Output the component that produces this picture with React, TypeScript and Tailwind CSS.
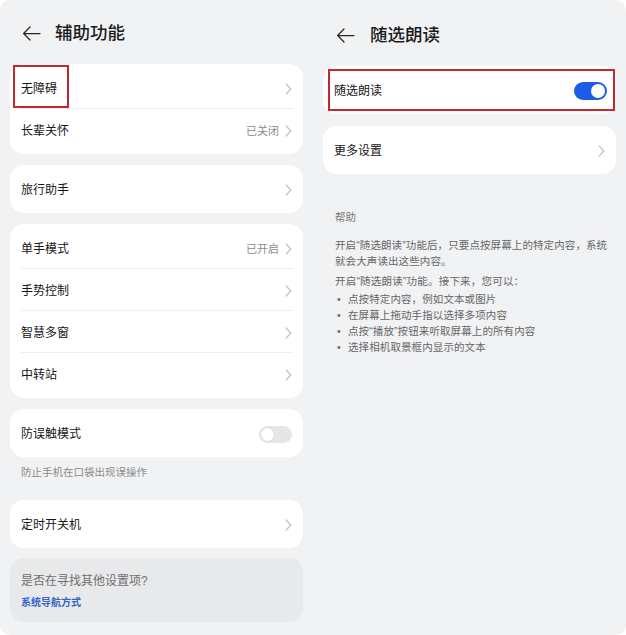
import React from "react";

const Chevron = () => (
  <svg width="7" height="12" viewBox="0 0 7 12" fill="none">
    <path d="M1.2 1l4.6 5-4.6 5" stroke="#c4c4c4" strokeWidth="1.3" strokeLinecap="round" strokeLinejoin="round" />
  </svg>
);

const Back = () => (
  <svg width="19" height="15" viewBox="0 0 19 15" fill="none">
    <path d="M18 7.5H1.6M8 1L1.6 7.5 8 14" stroke="#262626" strokeWidth="1.25" strokeLinecap="round" strokeLinejoin="round" />
  </svg>
);

const ToggleOff = () => (
  <div className="w-[33px] h-[17px] rounded-full bg-[#e6e6e8] p-[2px] flex items-center">
    <div className="w-[13px] h-[13px] rounded-full bg-white shadow-[0_0_2px_rgba(0,0,0,0.12)]" />
  </div>
);

const ToggleOn = () => (
  <div className="w-[33px] h-[18px] rounded-full bg-[#1b5ce9] p-[2px] flex items-center justify-end">
    <div className="w-[14px] h-[14px] rounded-full bg-white" />
  </div>
);

type RowProps = {
  label: string;
  value?: string;
  divider?: boolean;
  right?: React.ReactNode;
  children?: React.ReactNode;
};

const Row = ({ label, value, divider, right, children }: RowProps) => (
  <div className="relative h-[42px] flex items-center px-[11px] pt-[2px]">
    {children}
    <span className="flex-1 text-[12px] text-[#161616]">{label}</span>
    {value && <span className="text-[11px] text-[#8c8c8c] mr-[6px]">{value}</span>}
    {right ?? <Chevron />}
    {divider && <div className="absolute bottom-0 left-[10px] right-[10px] h-px bg-[#efefef]" />}
  </div>
);

const Card = ({ children }: { children: React.ReactNode }) => (
  <div className="bg-white rounded-[14px] py-[3px]">{children}</div>
);

export default function App() {
  return (
    <div className="w-[626px] h-[635px] bg-white font-['Liberation_Sans','Noto_Sans_CJK_SC',sans-serif]">
      <div className="w-[626px] h-[635px] bg-[#f1f2f4] rounded-[10px] flex overflow-hidden">
        {/* Left panel */}
        <div className="w-[313px] px-[10px] flex flex-col">
          <div className="h-[64px] flex items-center pt-[2px] pl-[12px]">
            <Back />
            <span className="ml-[14px] text-[17.5px] font-medium text-[#1a1a1a]">辅助功能</span>
          </div>
          <Card>
            <Row label="无障碍" divider>
              <div className="absolute left-[3px] top-[-2px] w-[56px] h-[43px] border-2 border-[#c3282f]" />
            </Row>
            <Row label="长辈关怀" value="已关闭" />
          </Card>
          <div className="h-[11px]" />
          <Card>
            <Row label="旅行助手" />
          </Card>
          <div className="h-[11px]" />
          <Card>
            <Row label="单手模式" value="已开启" divider />
            <Row label="手势控制" divider />
            <Row label="智慧多窗" divider />
            <Row label="中转站" />
          </Card>
          <div className="h-[11px]" />
          <Card>
            <Row label="防误触模式" right={<ToggleOff />} />
          </Card>
          <div className="h-[29px] flex items-center px-[11px] pt-[2px] text-[10.5px] text-[#8a8a8a]">
            防止手机在口袋出现误操作
          </div>
          <div className="h-[14px]" />
          <Card>
            <Row label="定时开关机" />
          </Card>
          <div className="h-[10px]" />
          <div className="h-[64px] bg-[#e8e9eb] rounded-[14px] px-[11px] pt-[15px]">
            <div className="text-[12px] leading-[16px] text-[#6f6f6f]">是否在寻找其他设置项?</div>
            <div className="mt-[7px] text-[10px] leading-[14px] font-bold text-[#3564c4]">系统导航方式</div>
          </div>
        </div>

        {/* Right panel */}
        <div className="w-[313px] pl-[10px] pr-[10px] flex flex-col">
          <div className="h-[66px] flex items-center pt-[4px] pl-[13px]">
            <Back />
            <span className="ml-[15px] text-[17.5px] font-medium text-[#1a1a1a]">随选朗读</span>
          </div>
          <Card>
            <Row label="随选朗读" right={<div className="mr-[-2px]"><ToggleOn /></div>}>
              <div className="absolute left-[5px] right-[1px] top-0 bottom-0 border-2 border-[#c3282f]" />
            </Row>
          </Card>
          <div className="h-[12px]" />
          <Card>
            <Row label="更多设置" />
          </Card>
          <div className="pl-[12px] pr-0 pt-[35px] text-[10.5px] leading-[16px] text-[#666666] whitespace-nowrap">
            <div className="text-[#777777]">帮助</div>
            <div className="mt-[12px] tracking-[0.1px]">
              开启“随选朗读”功能后，只要点按屏幕上的特定内容，系统
              <br />
              就会大声读出这些内容。
            </div>
            <div className="mt-[4px] tracking-[0.2px]">开启“随选朗读”功能。接下来，您可以：</div>
            <ul className="mt-[2px] tracking-[0.1px]">
              {["点按特定内容，例如文本或图片", "在屏幕上拖动手指以选择多项内容", "点按“播放”按钮来听取屏幕上的所有内容", "选择相机取景框内显示的文本"].map((t) => (
                <li key={t} className="flex">
                  <span className="w-[13px] pl-[2px]">•</span>
                  <span>{t}</span>
                </li>
              ))}
            </ul>
          </div>
        </div>
      </div>
    </div>
  );
}
